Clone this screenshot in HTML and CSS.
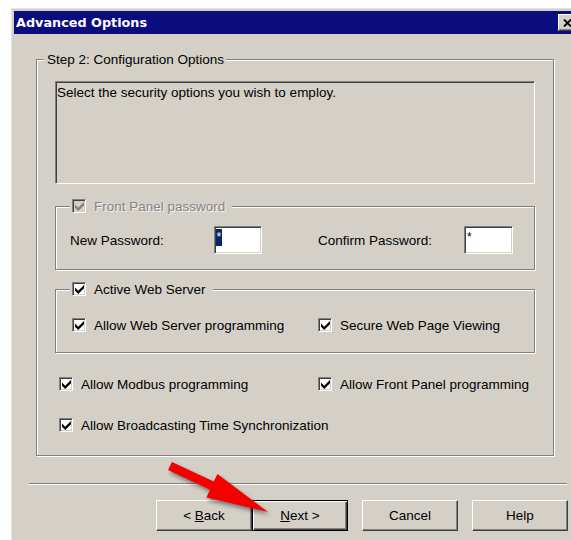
FILE: index.html
```html
<!DOCTYPE html>
<html lang="en">
<head>
<meta charset="utf-8">
<title>Advanced Options</title>
<link rel="stylesheet" href="styles.css">
</head>
<body>
<div class="dialog">
  <div class="titlebar">
    <span class="title">Advanced Options</span>
    <span class="close-btn">
      <svg width="9" height="8" viewBox="0 0 9 8"><path d="M1 0.5 L8 7.5 M8 0.5 L1 7.5" stroke="#000" stroke-width="1.8"/></svg>
    </span>
  </div>

  <div class="group step">
    <div class="caption step-caption">Step 2: Configuration Options</div>
    <div class="desc">Select the security options you wish to employ.</div>

    <div class="group sub">
      <div class="caption check-caption disabled">
        <span class="cb cb-disabled"><svg viewBox="0 0 7 7"><path d="M0 2 L2.5 4.5 L7 0 L7 2.5 L2.5 7 L0 4.5 Z"/></svg></span>
        <span class="cap-text">Front Panel password</span>
      </div>
      <div class="pw-row">
        <span class="pw-label">New Password:</span>
        <span class="edit edit-new"><span class="sel">*</span></span>
        <span class="pw-label pw-label-confirm">Confirm Password:</span>
        <span class="edit edit-confirm">*</span>
      </div>
    </div>

    <div class="group sub web">
      <div class="caption check-caption">
        <span class="cb"><svg viewBox="0 0 7 7"><path d="M0 2 L2.5 4.5 L7 0 L7 2.5 L2.5 7 L0 4.5 Z"/></svg></span>
        <span class="cap-text">Active Web Server</span>
      </div>
      <div class="opt-row web-row">
        <span class="opt web-col">
          <span class="cb"><svg viewBox="0 0 7 7"><path d="M0 2 L2.5 4.5 L7 0 L7 2.5 L2.5 7 L0 4.5 Z"/></svg></span>
          <span>Allow Web Server programming</span>
        </span>
        <span class="opt">
          <span class="cb"><svg viewBox="0 0 7 7"><path d="M0 2 L2.5 4.5 L7 0 L7 2.5 L2.5 7 L0 4.5 Z"/></svg></span>
          <span>Secure Web Page Viewing</span>
        </span>
      </div>
    </div>

    <div class="opt-row free-row modbus-row">
      <span class="opt free-col">
        <span class="cb"><svg viewBox="0 0 7 7"><path d="M0 2 L2.5 4.5 L7 0 L7 2.5 L2.5 7 L0 4.5 Z"/></svg></span>
        <span>Allow Modbus programming</span>
      </span>
      <span class="opt">
        <span class="cb"><svg viewBox="0 0 7 7"><path d="M0 2 L2.5 4.5 L7 0 L7 2.5 L2.5 7 L0 4.5 Z"/></svg></span>
        <span>Allow Front Panel programming</span>
      </span>
    </div>
    <div class="opt-row free-row sync-row">
      <span class="opt">
        <span class="cb"><svg viewBox="0 0 7 7"><path d="M0 2 L2.5 4.5 L7 0 L7 2.5 L2.5 7 L0 4.5 Z"/></svg></span>
        <span>Allow Broadcasting Time Synchronization</span>
      </span>
    </div>
  </div>

  <div class="separator"></div>

  <div class="buttons">
    <span class="btn"><span>&lt; <u>B</u>ack</span></span>
    <span class="btn btn-default"><span><u>N</u>ext &gt;</span></span>
    <span class="btn btn-gap"><span>Cancel</span></span>
    <span class="btn btn-gap"><span>Help</span></span>
  </div>
</div>

<svg class="pointer" width="571" height="540" viewBox="0 0 571 540">
  <polygon points="171.9,461.9 213.8,481.6 217.4,473.9 268,512 206.4,497.4 210,489.7 168.1,470.1" fill="#f40000"/>
</svg>
</body>
</html>
```

FILE: styles.css
```css
html, body {
  margin: 0;
  height: 100%;
  overflow: hidden;
  background: #fff;
}

body {
  position: relative;
  font-family: "Liberation Sans", Arial, sans-serif;
  font-size: 13.5px;
  color: #000;
}

/* window frame */
.dialog {
  margin: 8px 0 0 11px;
  width: 570px;
  height: 540px;
  box-sizing: border-box;
  padding-top: 2px;
  background: #d4d0c8;
  border-left: 1px solid #e6e3dd;
  border-top: 1px solid #e6e3dd;
}

.titlebar {
  display: flex;
  align-items: center;
  justify-content: space-between;
  height: 23px;
  margin: 0 2px 0 2px;
  padding-left: 2px;
  background: #0b0c7e;
}

.title {
  font-family: "DejaVu Sans", Tahoma, sans-serif;
  font-weight: bold;
  font-size: 12.8px;
  color: #fff;
}

.close-btn {
  display: flex;
  align-items: center;
  justify-content: center;
  width: 19px;
  height: 17px;
  margin-right: 2px;
  box-sizing: border-box;
  background: #d4d0c8;
  border: 1px solid;
  border-color: #fff #404040 #404040 #fff;
  box-shadow: inset -1px -1px 0 #808080;
}

/* etched group boxes */
.group {
  position: relative;
  box-sizing: border-box;
  border: 1px solid #808080;
  box-shadow: inset 1px 1px 0 #fff, 1px 1px 0 #fff;
}

.step {
  margin: 25px 0 0 24px;
  width: 518px;
  height: 397px;
  padding: 21px 0 0 18px;
}

.caption {
  position: absolute;
  top: -9px;
  height: 16px;
  display: flex;
  align-items: center;
  background: #d4d0c8;
  white-space: nowrap;
}

.step-caption {
  left: 7px;
  padding: 0 2px 0 3px;
}

.check-caption {
  left: 14px;
  gap: 8px;
  padding: 0 7px 0 2px;
}

.disabled .cap-text {
  color: #858585;
  text-shadow: 1px 1px 0 #f4f2ee;
}

.desc {
  box-sizing: border-box;
  width: 480px;
  height: 103px;
  padding: 3px 1px;
  border: 1px solid;
  border-color: #808080 #fff #fff #808080;
  box-shadow: inset 1px 1px 0 #404040, inset -1px -1px 0 #d4d0c8;
}

.sub {
  width: 480px;
  height: 64px;
  margin-top: 22px;
}

.web {
  margin-top: 19px;
}

/* password fields */
.pw-row {
  display: flex;
  align-items: center;
  padding: 19px 0 0 14px;
}

.pw-label {
  width: 144px;
}

.pw-label-confirm {
  width: 146px;
  margin-left: 56px;
}

.edit {
  box-sizing: border-box;
  height: 28px;
  padding: 2px 0 0 1px;
  background: #fff;
  border: 1px solid;
  border-color: #808080 #fff #fff #808080;
  box-shadow: inset 1px 1px 0 #404040, inset -1px -1px 0 #d4d0c8;
  line-height: 17px;
  font-size: 12px;
}

.edit-new {
  width: 48px;
}

.edit-confirm {
  width: 49px;
  padding-left: 2px;
}

.sel {
  display: inline-block;
  padding: 0 0.5px;
  background: #0a246a;
  color: #fff;
}

/* check boxes */
.cb {
  display: flex;
  align-items: center;
  justify-content: center;
  flex: none;
  width: 14px;
  height: 14px;
  box-sizing: border-box;
  background: #fff;
  border: 1px solid;
  border-color: #808080 #fff #fff #808080;
  box-shadow: inset 1px 1px 0 #404040, inset -1px -1px 0 #d4d0c8;
}

.cb svg {
  width: 9px;
  height: 9px;
  fill: #000;
}

.cb-disabled {
  background: #d4d0c8;
}

.cb-disabled svg {
  fill: #808080;
}

.opt-row {
  display: flex;
  align-items: center;
  height: 16px;
  white-space: nowrap;
}

.opt {
  display: flex;
  align-items: center;
  gap: 8px;
}

.web-row {
  padding: 27px 0 0 16px;
}

.web-col {
  width: 246px;
}

.free-row {
  margin-left: 4px;
}

.free-col {
  width: 259px;
}

.modbus-row {
  margin-top: 23px;
}

.sync-row {
  margin-top: 25px;
}

/* bottom area */
.separator {
  width: 538px;
  height: 0;
  margin: 27px 0 0 17px;
  border-top: 1px solid #808080;
  border-bottom: 1px solid #fff;
}

.buttons {
  display: flex;
  margin: 15px 0 0 144px;
}

.btn {
  display: flex;
  align-items: center;
  justify-content: center;
  width: 96px;
  height: 31px;
  box-sizing: border-box;
  border: 1px solid;
  border-color: #fff #404040 #404040 #fff;
  box-shadow: inset -1px -1px 0 #808080;
  white-space: pre;
}

.btn-default {
  border: 1px solid #000;
  box-shadow: inset 1px 1px 0 #fff, inset -1px -1px 0 #404040, inset -2px -2px 0 #808080;
}

.btn-gap {
  margin-left: 14px;
}

/* red pointer drawn over the dialog */
.pointer {
  position: absolute;
  left: 0;
  top: 0;
  pointer-events: none;
  filter: drop-shadow(2px 3px 2px rgba(0, 0, 0, 0.45));
}
```
